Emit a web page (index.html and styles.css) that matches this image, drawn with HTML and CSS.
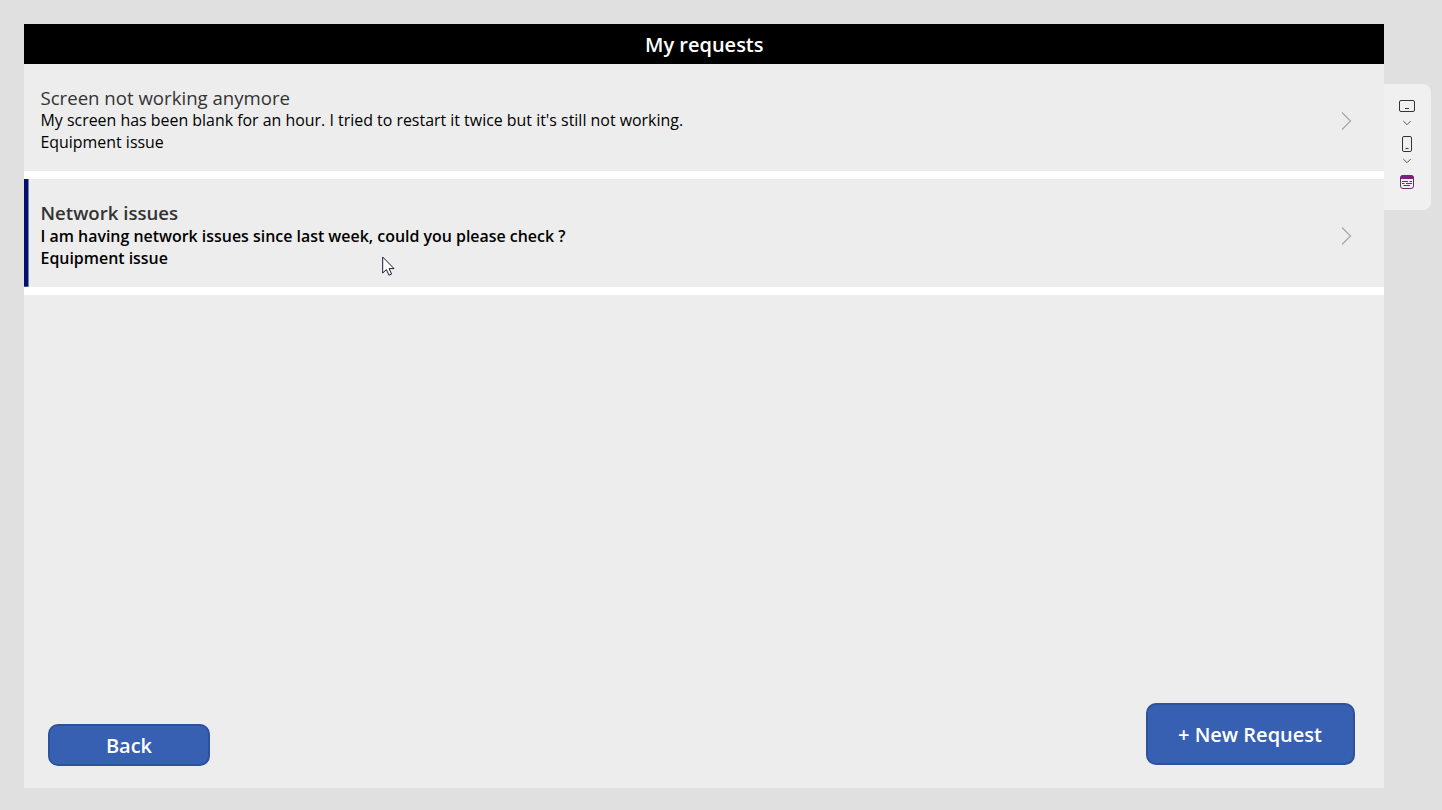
FILE: index.html
```html
<!DOCTYPE html>
<html lang="en">
<head>
  <meta charset="UTF-8">
  <meta name="viewport" content="width=device-width, initial-scale=1.0">
  <title>My requests</title>
  <link rel="stylesheet" href="styles.css">
</head>
<body>
  <main class="app">
    <header class="header">My requests</header>

    <div class="gallery">
      <div class="request">
        <div class="request-text">
          <div class="title">Screen not working anymore</div>
          <div class="subtitle">My screen has been blank for an hour. I tried to restart it twice but it's still not working.</div>
          <div class="category">Equipment issue</div>
        </div>
        <svg class="arrow" width="12" height="21" viewBox="0 0 12 21"><path d="M1 2.5 L9.5 11 L1 19.5"/></svg>
      </div>
      <div class="request selected">
        <div class="request-text">
          <div class="title">Network issues</div>
          <div class="subtitle">I am having network issues since last week, could you please check ?</div>
          <div class="category">Equipment issue</div>
        </div>
        <svg class="arrow" width="12" height="21" viewBox="0 0 12 21"><path d="M1 2.5 L9.5 11 L1 19.5"/></svg>
      </div>
    </div>

    <div class="actions">
      <button class="btn back">Back</button>
      <button class="btn new">+ New Request</button>
    </div>
  </main>

  <aside class="toolbar">
    <svg class="tablet" width="18" height="14" viewBox="0 0 18 14"><rect x="1.5" y="1.5" width="15" height="11" rx="1.5"/><path d="M7 9.5 H11"/></svg>
    <svg class="chevron" width="10" height="6" viewBox="0 0 10 6"><path d="M1.3 1 L5 4.7 L8.7 1"/></svg>
    <svg class="phone" width="12" height="18" viewBox="0 0 12 18"><rect x="1.5" y="1.5" width="9" height="15" rx="1.5"/><path d="M4.5 13.5 H7.5"/></svg>
    <svg class="chevron second" width="10" height="6" viewBox="0 0 10 6"><path d="M1.3 1 L5 4.7 L8.7 1"/></svg>
    <svg class="form" width="16" height="16" viewBox="0 0 16 16">
      <path class="form-top" d="M1.5 4.5 V4 A2.5 2.5 0 0 1 4 1.5 H12 A2.5 2.5 0 0 1 14.5 4 V4.5 Z"/>
      <rect x="1.5" y="1.5" width="13" height="13" rx="2.5"/>
      <path d="M3 7.5 H9 M10.5 7.5 H13 M3 9.5 H5.5 M7 9.5 H13 M4.5 11.5 H11"/>
    </svg>
  </aside>

  <svg class="cursor" width="13" height="21" viewBox="0 0 13 21"><path d="M0.7 1 V17 L4.4 13.6 L7 19.2 L9.6 18.1 L7.1 12.6 H12 Z"/></svg>
</body>
</html>
```

FILE: styles.css
```css
* {
  box-sizing: border-box;
}

body {
  margin: 0;
  padding: 24px 0 22px 24px;
  height: 810px;
  display: flex;
  align-items: flex-start;
  overflow: hidden;
  background-color: #e0e0e0;
  font-family: "Open Sans", sans-serif;
}

.app {
  width: 1359.5px;
  height: 764px;
  display: flex;
  flex-direction: column;
  background-color: #ededed;
}

.header {
  height: 40px;
  line-height: 41px;
  padding-left: 1px;
  background-color: black;
  color: white;
  text-align: center;
  font-size: 20px;
  font-weight: 600;
}

/* List of requests */
.request {
  height: 115.4px;
  display: flex;
  align-items: center;
  justify-content: space-between;
  padding: 5px 30.5px 0 16.5px;
  border-bottom: 8px solid white;
}

.title {
  line-height: 22.4px;
  font-size: 18.62px;
  color: #333;
}

.subtitle,
.category {
  line-height: 22px;
  font-size: 15.93px;
  color: black;
}

.selected {
  background: linear-gradient(#00126b, #00126b) no-repeat left / 4.5px 100%;
}

.selected .request-text div {
  font-weight: 600;
}

.arrow path {
  fill: none;
  stroke: #a6a6a6;
  stroke-width: 1.2;
}

/* Buttons */
.actions {
  margin-top: auto;
  padding: 0 29px 22px 24px;
  display: flex;
  align-items: flex-end;
  justify-content: space-between;
}

.btn {
  padding: 0;
  background-color: #3860b2;
  color: white;
  border: 2px solid #2d529c;
  border-radius: 10px;
  font-family: inherit;
  font-size: 20px;
  font-weight: 600;
  cursor: pointer;
}

.back {
  width: 162px;
  height: 42px;
}

.new {
  width: 209px;
  height: 62px;
  margin-bottom: 1px;
}

/* Device bar on the right */
.toolbar {
  width: 47.5px;
  height: 126px;
  margin-top: 60px;
  padding-top: 15px;
  display: flex;
  flex-direction: column;
  align-items: center;
  background-color: #f0f0f0;
  border-radius: 0 8px 8px 0;
}

.toolbar svg {
  fill: none;
  stroke: #333;
  stroke-width: 1;
}

.toolbar .chevron {
  margin: 7px 0 9px;
  stroke: #555;
}

.toolbar .second {
  margin: 5px 0 10px;
}

.toolbar .form {
  stroke: #742774;
}

.form .form-top {
  fill: #742774;
}

.cursor {
  position: absolute;
  left: 382px;
  top: 256px;
}

.cursor path {
  fill: white;
  stroke: #1a1a2e;
  stroke-width: 1;
}
```
